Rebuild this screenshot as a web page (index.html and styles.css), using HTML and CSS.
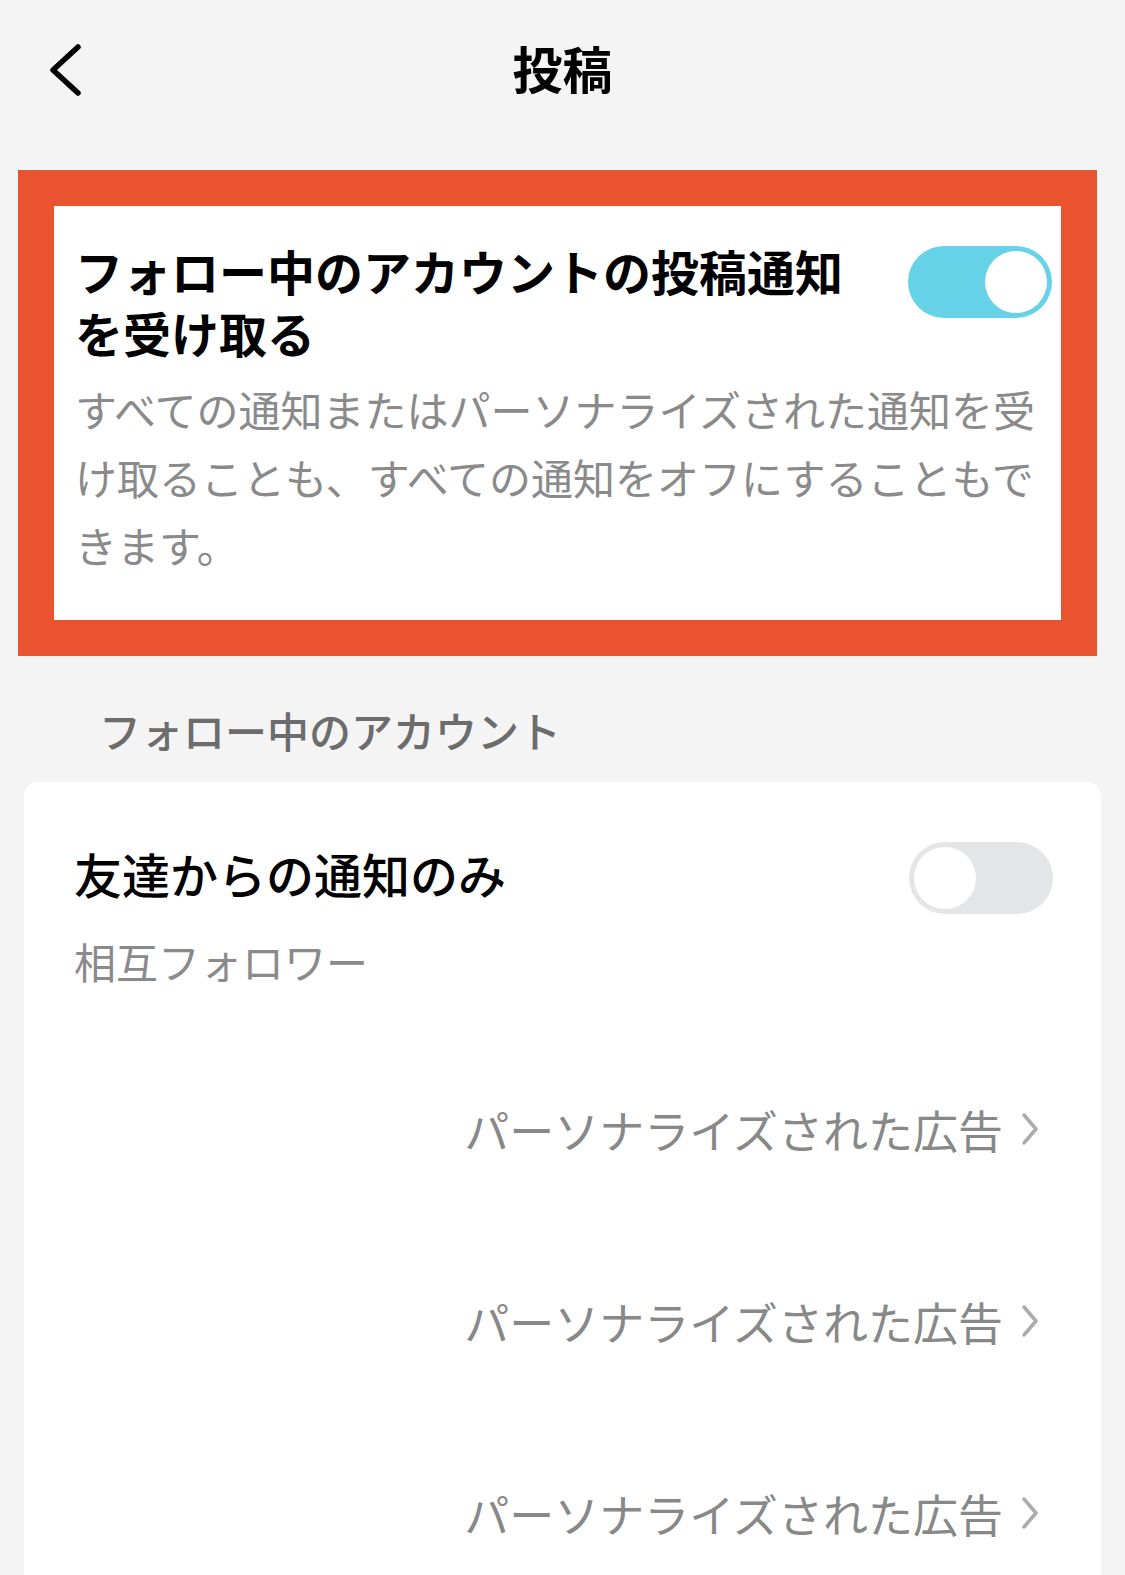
FILE: index.html
```html
<!DOCTYPE html>
<html lang="ja">
<head>
    <meta charset="UTF-8">
    <title>投稿</title>
    <meta name="viewport" content="width=device-width, initial-scale=1.0">
    <link rel="stylesheet" href="styles.css">
</head>
<body>
    <header class="topbar">
        <a href="#" class="back" aria-label="戻る">
            <svg width="40" height="60" viewBox="0 0 40 60">
                <polyline points="30,7 5,30 30,53" fill="none" stroke="#000" stroke-width="5.5" stroke-linecap="round" stroke-linejoin="round"/>
            </svg>
        </a>
        <h1>投稿</h1>
        <span></span>
    </header>

    <section class="highlight">
        <div class="setting">
            <div class="setting-head">
                <h2>フォロー中のアカウントの投稿通知を受け取る</h2>
                <span class="toggle on"><span class="knob"></span></span>
            </div>
            <p class="setting-desc">すべての通知またはパーソナライズされた通知を受け取ることも、すべての通知をオフにすることもできます。</p>
        </div>
    </section>

    <h3 class="section-label">フォロー中のアカウント</h3>

    <div class="card">
        <div class="card-row">
            <span class="row-title">友達からの通知のみ</span>
            <span class="toggle"><span class="knob"></span></span>
        </div>
        <p class="row-sub">相互フォロワー</p>

        <a href="#" class="ad-link">パーソナライズされた広告<svg class="chev" width="22" height="40" viewBox="0 0 22 40"><polyline points="5,6 17,20 5,34" fill="none" stroke="#ababab" stroke-width="3.5" stroke-linecap="round" stroke-linejoin="round"/></svg></a>
        <a href="#" class="ad-link">パーソナライズされた広告<svg class="chev" width="22" height="40" viewBox="0 0 22 40"><polyline points="5,6 17,20 5,34" fill="none" stroke="#ababab" stroke-width="3.5" stroke-linecap="round" stroke-linejoin="round"/></svg></a>
        <a href="#" class="ad-link">パーソナライズされた広告<svg class="chev" width="22" height="40" viewBox="0 0 22 40"><polyline points="5,6 17,20 5,34" fill="none" stroke="#ababab" stroke-width="3.5" stroke-linecap="round" stroke-linejoin="round"/></svg></a>
    </div>
</body>
</html>
```

FILE: styles.css
```css
body {
    margin: 0;
    background: #f4f4f4;
    font-family: "Noto Sans CJK JP", "Noto Sans", sans-serif;
    color: #000;
    height: 1575px;
    overflow: hidden;
}
.topbar {
    display: grid;
    grid-template-columns: 1fr auto 1fr;
    align-items: center;
    height: 140px;
}
.back {
    display: flex;
    align-items: center;
    padding-left: 48px;
}
.back svg {
    display: block;
}
.topbar h1 {
    margin: 0 0 6px;
    font-size: 50px;
    font-weight: 700;
    line-height: 60px;
}
.highlight {
    margin: 30px 28px 0 18px;
    border: 36px solid #e9532f;
    background: #fff;
}
.setting {
    padding: 33px 9px 41px 21px;
}
.setting-head {
    display: flex;
    align-items: flex-start;
    gap: 60px;
}
.setting-head h2 {
    flex: 1;
    margin: 0;
    font-size: 48px;
    font-weight: 700;
    line-height: 62px;
}
.toggle {
    flex: none;
    position: relative;
    width: 144px;
    height: 72px;
    border-radius: 36px;
    background: #e4e5e7;
    margin-top: 7px;
}
.toggle .knob {
    position: absolute;
    top: 5px;
    left: 5px;
    width: 62px;
    height: 62px;
    border-radius: 50%;
    background: #fff;
}
.toggle.on {
    background: #66d2e8;
}
.toggle.on .knob {
    left: auto;
    right: 5px;
}
.setting-desc {
    margin: 12px 0 0;
    font-size: 42px;
    line-height: 68px;
    color: #8a8a8a;
}
.section-label {
    margin: 44px 0 0 99px;
    font-size: 42px;
    font-weight: 500;
    line-height: 60px;
    color: #6c6c6c;
}
.card {
    margin: 22px 24px 0;
    background: #fff;
    border-radius: 14px 14px 0 0;
    padding: 60px 48px 0 50px;
    min-height: 800px;
}
.card-row {
    display: flex;
    align-items: center;
    justify-content: space-between;
}
.card-row .toggle {
    margin-top: 0;
}
.row-title {
    padding-bottom: 10px;
    font-size: 48px;
    font-weight: 500;
    line-height: 60px;
}
.row-sub {
    margin: 17px 0 44px;
    font-size: 42px;
    line-height: 60px;
    color: #8a8a8a;
}
.ad-link {
    display: flex;
    align-items: center;
    justify-content: flex-end;
    height: 192px;
    padding-right: 12px;
    padding-bottom: 4px;
    box-sizing: border-box;
    font-size: 45px;
    color: #888;
    text-decoration: none;
}
.chev {
    margin-left: 16px;
}
```
